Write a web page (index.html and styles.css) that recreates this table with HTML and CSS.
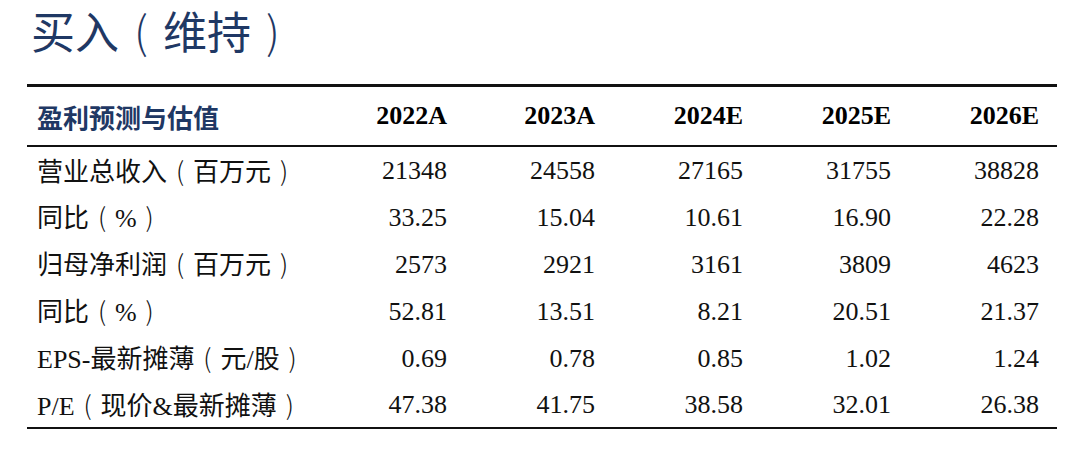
FILE: index.html
```html
<!DOCTYPE html>
<html lang="zh">
<head>
<meta charset="utf-8">
<link rel="stylesheet" href="styles.css">
</head>
<body>
<div class="page">
  <h1 class="title">买入<span class="p">(</span>维持<span class="p">)</span></h1>
  <table class="fin">
    <colgroup>
      <col class="c-label">
      <col class="c-num">
      <col class="c-num">
      <col class="c-num">
      <col class="c-num">
      <col class="c-last">
    </colgroup>
    <thead>
      <tr>
        <th class="label">盈利预测与估值</th>
        <th>2022A</th>
        <th>2023A</th>
        <th>2024E</th>
        <th>2025E</th>
        <th>2026E</th>
      </tr>
    </thead>
    <tbody>
      <tr><td class="label">营业总收入<span class="p">(</span>百万元<span class="p">)</span></td><td>21348</td><td>24558</td><td>27165</td><td>31755</td><td>38828</td></tr>
      <tr><td class="label">同比<span class="p">(</span>%<span class="p">)</span></td><td>33.25</td><td>15.04</td><td>10.61</td><td>16.90</td><td>22.28</td></tr>
      <tr><td class="label">归母净利润<span class="p">(</span>百万元<span class="p">)</span></td><td>2573</td><td>2921</td><td>3161</td><td>3809</td><td>4623</td></tr>
      <tr><td class="label">同比<span class="p">(</span>%<span class="p">)</span></td><td>52.81</td><td>13.51</td><td>8.21</td><td>20.51</td><td>21.37</td></tr>
      <tr><td class="label">EPS-最新摊薄<span class="p">(</span>元/股<span class="p">)</span></td><td>0.69</td><td>0.78</td><td>0.85</td><td>1.02</td><td>1.24</td></tr>
      <tr><td class="label">P/E<span class="p">(</span>现价&amp;最新摊薄<span class="p">)</span></td><td>47.38</td><td>41.75</td><td>38.58</td><td>32.01</td><td>26.38</td></tr>
    </tbody>
  </table>
</div>
</body>
</html>
```

FILE: styles.css
```css
html, body {
  margin: 0;
  padding: 0;
  background: #ffffff;
}

.page {
  width: 1080px;
  height: 454px;
  padding: 0 0 0 27px;
  box-sizing: border-box;
  font-family: "Liberation Serif", "Noto Sans CJK SC", serif;
  color: #111111;
}

.title {
  margin: 0;
  padding: 6px 0 0 4px;
  height: 75px;
  box-sizing: border-box;
  font-family: "Noto Sans CJK SC", sans-serif;
  font-weight: 400;
  font-size: 44px;
  line-height: 48px;
  color: #1f3864;
}

.p {
  display: inline-block;
  width: 1em;
  text-align: center;
  font-family: "Noto Sans CJK SC", sans-serif;
  font-weight: 300;
}

.fin {
  width: 1030px;
  border-collapse: collapse;
  table-layout: fixed;
  margin-top: 9px;
}

.c-label {
  width: 272px;
}

.c-num {
  width: 148px;
}

.c-last {
  width: 166px;
}

.fin th,
.fin td {
  padding: 0;
  text-align: right;
  font-size: 26px;
  white-space: nowrap;
}

.fin th:last-child,
.fin td:last-child {
  padding-right: 18px;
}

.fin thead tr {
  border-top: 3px solid #111111;
  border-bottom: 2px solid #111111;
}

.fin th {
  height: 58px;
  font-weight: bold;
  color: #000000;
  vertical-align: middle;
}

.fin th.label {
  color: #1f3864;
  font-family: "Noto Sans CJK SC", sans-serif;
  font-weight: bold;
  font-size: 26px;
}

.fin .label {
  text-align: left;
  padding-left: 10px;
}

.fin tbody tr {
  height: 47px;
}

.fin tbody td {
  vertical-align: middle;
  line-height: 30px;
  padding-top: 2px;
}

.fin tbody tr:last-child {
  border-bottom: 2px solid #111111;
}

.fin td.label {
  font-weight: normal;
}
```
